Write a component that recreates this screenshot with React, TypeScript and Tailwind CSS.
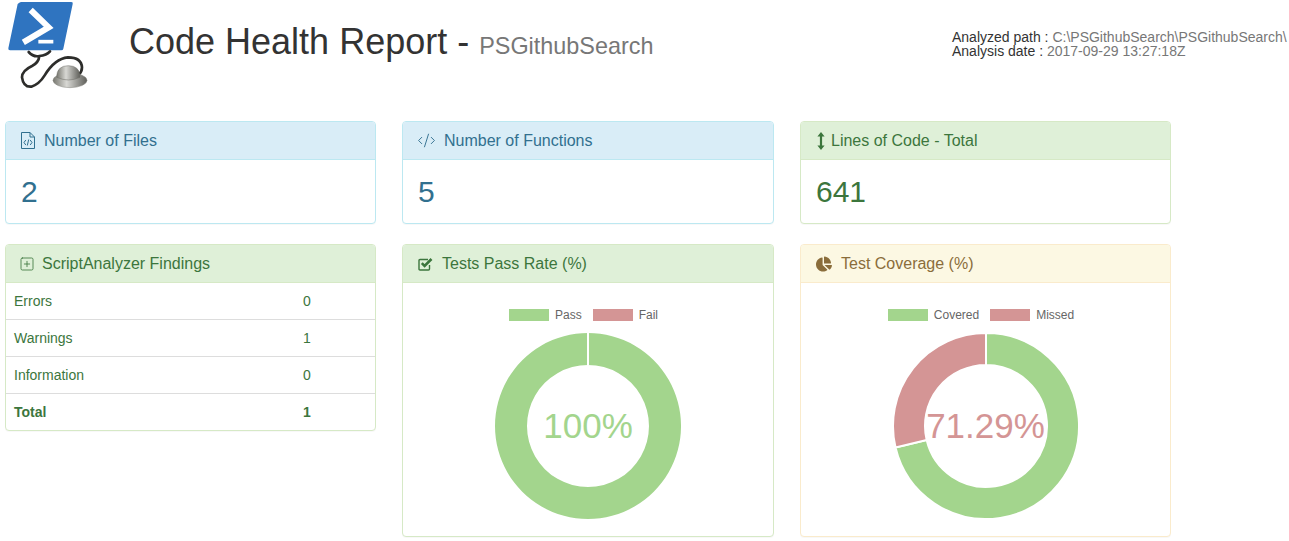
import React from 'react';
import { CodeXml, SquarePlus } from 'lucide-react';
import { FaChartPie } from 'react-icons/fa';

type Tone = 'info' | 'success' | 'warning';

const tones: Record<Tone, { panel: string; head: string }> = {
  info: { panel: 'border-[#bce8f1]', head: 'bg-[#d9edf7] border-[#bce8f1] text-[#31708f]' },
  success: { panel: 'border-[#d6e9c6]', head: 'bg-[#dff0d8] border-[#d6e9c6] text-[#3c763d]' },
  warning: { panel: 'border-[#faebcc]', head: 'bg-[#fcf8e3] border-[#faebcc] text-[#8a6d3b]' },
};

const GREEN = '#a3d58d';
const RED = '#d49595';

const Panel: React.FC<{ tone: Tone; icon: React.ReactNode; title: string; children: React.ReactNode }> = ({
  tone,
  icon,
  title,
  children,
}) => (
  <div className={`bg-white border rounded shadow-[0_1px_1px_rgba(0,0,0,0.03)] ${tones[tone].panel}`}>
    <div className={`flex items-center h-[38px] px-[15px] border-b rounded-t-[3px] text-base ${tones[tone].head}`}>
      {icon}
      <span>{title}</span>
    </div>
    {children}
  </div>
);

const Stat: React.FC<{ value: string; color: string }> = ({ value, color }) => (
  <div className={`h-[63px] px-[15px] pt-[15px] text-[30px] leading-[34px] ${color}`}>{value}</div>
);

// point on the ring, angle clockwise from 12 o'clock
const polar = (r: number, deg: number) => {
  const a = (deg * Math.PI) / 180;
  return `${93 + r * Math.sin(a)} ${93 - r * Math.cos(a)}`;
};

const arc = (from: number, to: number) => {
  const large = to - from > 180 ? 1 : 0;
  return `M${polar(93, from)} A93 93 0 ${large} 1 ${polar(93, to)} L${polar(61, to)} A61 61 0 ${large} 0 ${polar(61, from)} Z`;
};

const Donut: React.FC<{ percent: number; label: string; labelColor: string; legend: [string, string] }> = ({
  percent,
  label,
  labelColor,
  legend,
}) => {
  const split = (percent / 100) * 360;
  return (
    <div className="h-[253px] pt-[26px] flex flex-col items-center">
      <div className="flex items-center h-3 pl-px text-xs text-[#666]">
        <span className="w-10 h-3 mr-1.5 bg-[#a3d58d]" />
        <span className="mr-[11px]">{legend[0]}</span>
        <span className="w-10 h-3 mr-1.5 bg-[#d49595]" />
        <span className="mr-2.5">{legend[1]}</span>
      </div>
      <div className="relative w-[186px] h-[186px] mt-[12px]">
        <svg viewBox="0 0 186 186" className="w-[186px] h-[186px]">
          {percent >= 100 ? (
            <>
              <path d="M93 0a93 93 0 1 0 .01 0Z M93 32a61 61 0 1 1 -.01 0Z" fill={GREEN} fillRule="evenodd" />
              <line x1="93" y1="0" x2="93" y2="32" stroke="#fff" strokeWidth="2" />
            </>
          ) : (
            <>
              <path d={arc(0, split)} fill={GREEN} stroke="#fff" strokeWidth="2" />
              <path d={arc(split, 360)} fill={RED} stroke="#fff" strokeWidth="2" />
            </>
          )}
        </svg>
        <div className={`absolute inset-0 flex items-center justify-center text-[35px] whitespace-nowrap ${labelColor}`}>
          {label}
        </div>
      </div>
    </div>
  );
};

const Logo = () => (
  <svg viewBox="0 0 330 300" className="w-[110px] h-[100px] shrink-0">
    <defs>
      <linearGradient id="steel" x1="0" x2="1" y1="0" y2="0">
        <stop offset="0" stopColor="#77776f" />
        <stop offset="0.4" stopColor="#d8d8d4" />
        <stop offset="1" stopColor="#5f5f5a" />
      </linearGradient>
    </defs>
    <path d="M58 8 Q60 6 64 6 H214 Q220 6 218 12 L190 146 Q189 151 184 151 H30 Q24 151 25 145 L53 12 Z" fill="#2f74c0" />
    <path d="M92 30 L146 82 L70 127" fill="none" stroke="#fff" strokeWidth="18" />
    <path d="M115 125 H160" stroke="#fff" strokeWidth="11" />
    <path
      d="M86 156 Q100 172 118 168 Q140 166 150 154 M118 168 Q116 188 96 198 Q66 212 66 232 Q70 262 94 260 Q118 252 134 226 Q164 176 204 172 Q244 172 246 202 Q246 216 236 224"
      fill="none"
      stroke="#2d2d2b"
      strokeWidth="8"
      strokeLinecap="round"
    />
    <ellipse cx="210" cy="241" rx="51" ry="22" fill="url(#steel)" stroke="#85857f" strokeWidth="1.5" />
    <path d="M170 232 Q170 197 205 197 Q240 197 240 232 Q206 248 170 232 Z" fill="url(#steel)" stroke="#6a6a64" strokeWidth="1.5" />
  </svg>
);

const FileIcon = () => (
  <svg viewBox="0 0 14 17" className="w-[14px] h-[17px] mr-[9px]" fill="none" stroke="currentColor" strokeWidth="1">
    <path d="M.5 .5 H9 L13.5 5 V16.5 H.5 Z M9 .5 V5 H13.5" />
    <path d="M4.8 8 L3 10.5 L4.8 13 M9.2 8 L11 10.5 L9.2 13 M7.7 7.5 L6.3 13.5" />
  </svg>
);

const ArrowsV = () => (
  <svg viewBox="0 0 8 18" className="w-2 h-[18px] mr-[6px] ml-px" fill="currentColor">
    <path d="M4 0 L7.6 4.4 H5.1 V13.6 H7.6 L4 18 L.4 13.6 H2.9 V4.4 H.4 Z" />
  </svg>
);

const CheckSquare = () => (
  <svg viewBox="0 0 15 14" className="w-[15px] h-[14px] mr-[9px]" fill="none" stroke="currentColor">
    <path d="M11.5 8 V12 Q11.5 13 10.5 13 H2 Q1 13 1 12 V3.5 Q1 2.5 2 2.5 H10" strokeWidth="1.4" />
    <path d="M3.8 6.2 L6.6 9 L13.5 2" strokeWidth="2.6" />
  </svg>
);

const findings = [
  ['Errors', '0'],
  ['Warnings', '1'],
  ['Information', '0'],
];

export default function App() {
  return (
    <div className="font-['Liberation_Sans',Arial,sans-serif] text-[14px] text-[#333] bg-white w-[1289px] min-h-[541px]">
      <header className="flex h-[121px]">
        <Logo />
        <div className="ml-[19px] mt-5 h-[44px] flex items-baseline whitespace-nowrap">
          <span className="text-[36px] leading-[44px]">Code Health Report -&nbsp;</span>
          <span className="text-[23.4px] text-[#777]">PSGithubSearch</span>
        </div>
        <div className="ml-auto w-[337px] mt-[30px] leading-[14px] whitespace-nowrap">
          <div>
            Analyzed path : <span className="text-[#777]">C:\PSGithubSearch\PSGithubSearch\</span>
          </div>
          <div>
            Analysis date : <span className="text-[#777]">2017-09-29 13:27:18Z</span>
          </div>
        </div>
      </header>

      <main className="ml-[5px] w-[1166px] grid grid-cols-[371px_372px_371px] gap-x-[26px] gap-y-5">
        <Panel tone="info" title="Number of Files" icon={<FileIcon />}>
          <Stat value="2" color="text-[#31708f]" />
        </Panel>
        <Panel tone="info" title="Number of Functions" icon={<CodeXml size={19} strokeWidth={1.2} className="mr-2 -ml-px" />}>
          <Stat value="5" color="text-[#31708f]" />
        </Panel>
        <Panel tone="success" title="Lines of Code - Total" icon={<ArrowsV />}>
          <Stat value="641" color="text-[#3c763d]" />
        </Panel>

        <div className="self-start">
          <Panel tone="success" title="ScriptAnalyzer Findings" icon={<SquarePlus size={16} strokeWidth={1.25} className="mr-[7px] -ml-[2px]" />}>
            <table className="w-full text-[#3c763d] border-collapse">
              <tbody>
                {findings.map(([name, count], i) => (
                  <tr key={name} className={i > 0 ? 'border-t border-[#ddd]' : ''}>
                    <td className={`px-2 leading-5 w-[289px] ${i > 0 ? 'h-[37px]' : 'h-9'}`}>{name}</td>
                    <td className={`px-2 leading-5 ${i > 0 ? 'h-[37px]' : 'h-9'}`}>{count}</td>
                  </tr>
                ))}
                <tr className="border-t border-[#ddd] font-bold">
                  <td className="px-2 h-[37px] leading-5 w-[289px]">Total</td>
                  <td className="px-2 h-[37px] leading-5">1</td>
                </tr>
              </tbody>
            </table>
          </Panel>
        </div>
        <Panel tone="success" title="Tests Pass Rate (%)" icon={<CheckSquare />}>
          <Donut percent={100} label="100%" labelColor="text-[#a3d58d]" legend={['Pass', 'Fail']} />
        </Panel>
        <Panel tone="warning" title="Test Coverage (%)" icon={<FaChartPie size={16} className="mr-[9px]" />}>
          <Donut percent={71.29} label="71.29%" labelColor="text-[#d49595]" legend={['Covered', 'Missed']} />
        </Panel>
      </main>
    </div>
  );
}
